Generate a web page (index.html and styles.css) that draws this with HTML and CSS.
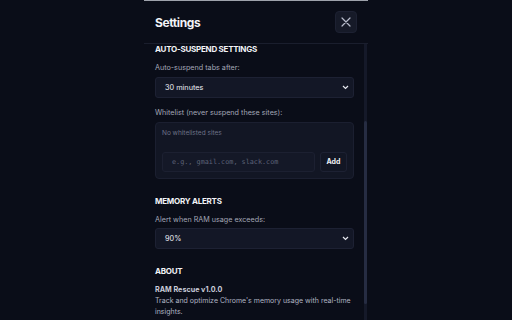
FILE: index.html
```html
<!DOCTYPE html>
<html>
<head>
<meta charset="utf-8">
<link rel="stylesheet" href="styles.css">
</head>
<body>
<div class="panel">
  <div class="topline"></div>
  <header class="header">
    <h1 class="title">Settings</h1>
    <button class="close" aria-label="Close">
      <svg width="10" height="10" viewBox="0 0 10 10"><path d="M1 1L9 9M9 1L1 9" stroke="#b8bccb" stroke-width="1.2" stroke-linecap="round"/></svg>
    </button>
  </header>
  <div class="body">
    <div class="content">
      <section class="section">
        <h2 class="heading">Auto-Suspend Settings</h2>
        <label class="label">Auto-suspend tabs after:</label>
        <div class="select"><span>30 minutes</span>
          <svg width="7" height="5" viewBox="0 0 7 5"><path d="M1 1L3.5 3.5L6 1" stroke="#e6e8ef" stroke-width="1.2" fill="none"/></svg>
        </div>
        <label class="label label-gap">Whitelist (never suspend these sites):</label>
        <div class="whitelist">
          <div class="empty">No whitelisted sites</div>
          <div class="addrow">
            <div class="input">e.g., gmail.com, slack.com</div>
            <button class="add">Add</button>
          </div>
        </div>
      </section>
      <section class="section">
        <h2 class="heading">Memory Alerts</h2>
        <label class="label">Alert when RAM usage exceeds:</label>
        <div class="select"><span>90%</span>
          <svg width="7" height="5" viewBox="0 0 7 5"><path d="M1 1L3.5 3.5L6 1" stroke="#e6e8ef" stroke-width="1.2" fill="none"/></svg>
        </div>
      </section>
      <section class="section">
        <h2 class="heading">About</h2>
        <div class="app">RAM Rescue v1.0.0</div>
        <p class="desc">Track and optimize Chrome's memory usage with real-time insights.</p>
      </section>
    </div>
    <div class="scrollbar"><div class="thumb"></div></div>
  </div>
</div>
</body>
</html>
```
FILE: styles.css
```css
* { box-sizing: border-box; }
html, body { margin: 0; padding: 0; }
body {
  background: #0a0d18;
  font-family: "Inter", "Liberation Sans", sans-serif;
  color: #e6e8ef;
  width: 512px;
  height: 320px;
  overflow: hidden;
}
.panel {
  width: 224px;
  margin-left: 144px;
  display: flex;
  flex-direction: column;
  height: 320px;
}
.topline {
  height: 1px;
  background: #9ea2ab;
}
.header {
  height: 43px;
  display: flex;
  align-items: center;
  justify-content: space-between;
  padding: 0 11px 0 11px;
  border-bottom: 1px solid #1a1e2d;
}
.title {
  margin: 0;
  font-size: 12px;
  font-weight: 700;
  color: #f2f3f7;
  letter-spacing: -0.4px;
}
.close {
  width: 22px;
  height: 22px;
  border-radius: 4px;
  background: #161a28;
  border: 1px solid #1d2132;
  display: flex;
  align-items: center;
  justify-content: center;
  padding: 0;
}
.body {
  flex: 1;
  display: flex;
  min-height: 0;
}
.content {
  flex: 1;
  padding: 0 10px 0 11px;
  overflow: hidden;
}
.scrollbar {
  width: 3px;
  margin-right: 1px;
  background: #151929;
  padding-top: 77px;
  padding-bottom: 16px;
  display: flex;
}
.thumb {
  flex: 1;
  background: #262c42;
  border-radius: 2px;
}
.section { margin-bottom: 17px; }
.heading {
  margin: 0;
  font-size: 8px;
  font-weight: 700;
  text-transform: uppercase;
  color: #f2f3f7;
  letter-spacing: -0.25px;
  line-height: 11px;
}
.label {
  display: block;
  margin-top: 8px;
  font-size: 7.2px;
  color: #a3a7b7;
  line-height: 10px;
}
.label-gap { margin-top: 10px; }
.select {
  margin-top: 3.5px;
  height: 21px;
  background: #131726;
  border: 1px solid #1d2133;
  border-radius: 3px;
  display: flex;
  align-items: center;
  justify-content: space-between;
  padding: 0 4px 0 9px;
  font-size: 7.3px;
  color: #eceef4;
}
.whitelist {
  margin-top: 4px;
  background: #121624;
  border: 1px solid #1b1f30;
  border-radius: 4px;
  padding: 6px 6px 6px 6px;
}
.empty {
  font-size: 6.5px;
  color: #6e7388;
  line-height: 9px;
}
.addrow {
  margin-top: 14px;
  display: flex;
  gap: 5px;
}
.input {
  flex: 1;
  height: 20px;
  background: #141827;
  border: 1px solid #1c2031;
  border-radius: 3px;
  display: flex;
  align-items: center;
  padding-left: 9px;
  font-family: "DejaVu Sans Mono", "Liberation Mono", monospace;
  font-size: 6.8px;
  color: #5d6277;
}
.add {
  width: 27px;
  height: 20px;
  background: #121624;
  border: 1px solid #1d2133;
  border-radius: 3px;
  font-family: "Inter", "Liberation Sans", sans-serif;
  font-size: 7px;
  font-weight: 700;
  color: #f2f3f7;
  padding: 0;
}
.app {
  margin-top: 7px;
  font-size: 7.2px;
  font-weight: 700;
  color: #c9ccd8;
  line-height: 11px;
}
.desc {
  margin: 0;
  font-size: 7px;
  color: #b0b4c3;
  line-height: 11px;
}
```
